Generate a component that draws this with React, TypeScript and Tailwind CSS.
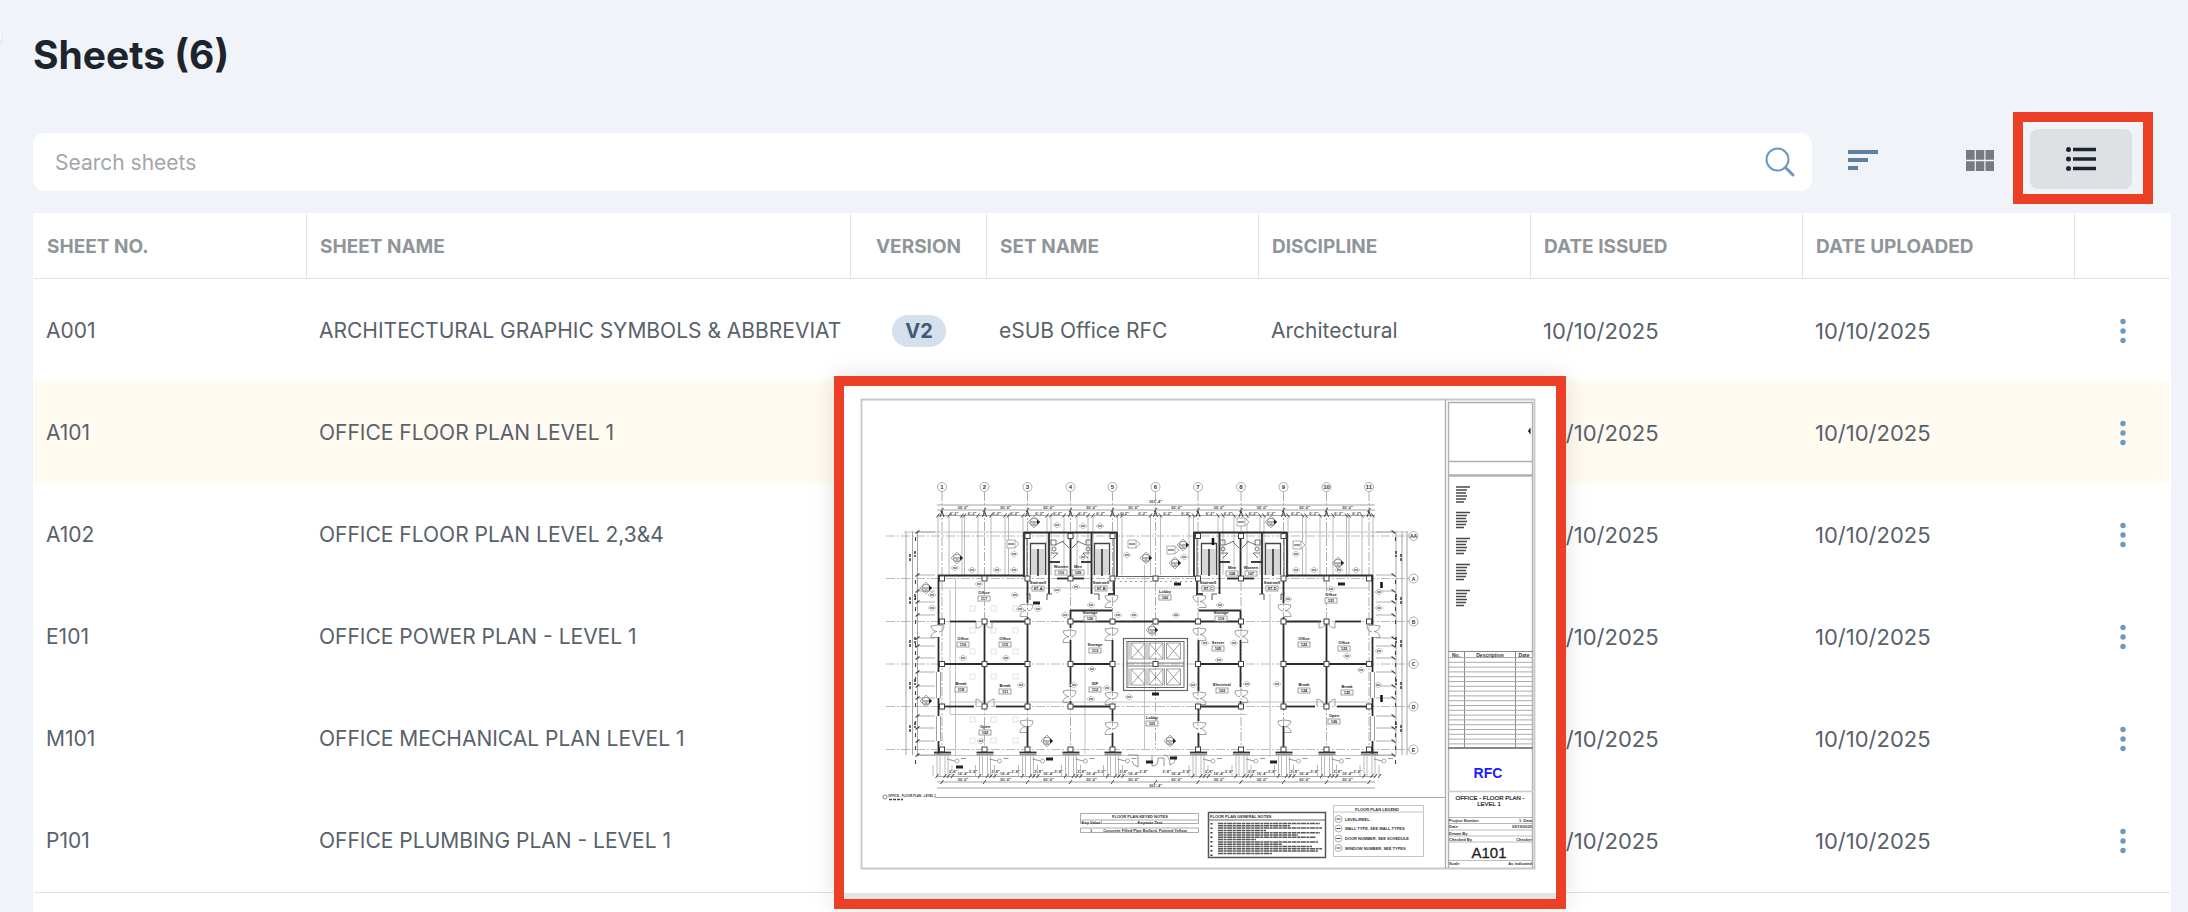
import type { ReactNode } from 'react';

type Sheet = {
  no: string;
  name: string;
  version: string;
  set: string;
  discipline: string;
  issued: string;
  uploaded: string;
  active?: boolean;
};

const sheets: Sheet[] = [
  { no: 'A001', name: 'ARCHITECTURAL GRAPHIC SYMBOLS & ABBREVIAT', version: 'V2', set: 'eSUB Office RFC', discipline: 'Architectural', issued: '10/10/2025', uploaded: '10/10/2025' },
  { no: 'A101', name: 'OFFICE FLOOR PLAN LEVEL 1', version: '', set: '', discipline: '', issued: '10/10/2025', uploaded: '10/10/2025', active: true },
  { no: 'A102', name: 'OFFICE FLOOR PLAN LEVEL 2,3&4', version: '', set: '', discipline: '', issued: '10/10/2025', uploaded: '10/10/2025' },
  { no: 'E101', name: 'OFFICE POWER PLAN - LEVEL 1', version: '', set: '', discipline: '', issued: '10/10/2025', uploaded: '10/10/2025' },
  { no: 'M101', name: 'OFFICE MECHANICAL PLAN LEVEL 1', version: '', set: '', discipline: '', issued: '10/10/2025', uploaded: '10/10/2025' },
  { no: 'P101', name: 'OFFICE PLUMBING PLAN - LEVEL 1', version: '', set: '', discipline: '', issued: '10/10/2025', uploaded: '10/10/2025' },
];

/* ---------- icons ---------- */

function SearchIcon() {
  return (
    <svg width="30" height="30" viewBox="0 0 30 30" fill="none" stroke="#6f98c0">
      <circle cx="12.5" cy="12.5" r="11" strokeWidth="2" />
      <path d="M20.5 20.5 28 28" strokeWidth="3" strokeLinecap="round" />
    </svg>
  );
}

function SortIcon() {
  return (
    <svg width="30" height="20" viewBox="0 0 30 20" fill="#5f7f9f">
      <path d="M0 0h30v4H0zM0 8h20v4H0zM0 16h10v4H0z" />
    </svg>
  );
}

function GridIcon() {
  return (
    <svg width="28" height="21" viewBox="0 0 28 21" fill="#757b80">
      <path d="M0 0h8.7v9.8H0zM9.9 0h8.4v9.8H9.9zM19.5 0H28v9.8h-8.5zM0 11.2h8.7V21H0zM9.9 11.2h8.4V21H9.9zM19.5 11.2H28V21h-8.5z" />
    </svg>
  );
}

function ListIcon() {
  return (
    <svg width="30" height="24" viewBox="0 0 30 24" fill="#1d242d">
      <circle cx="2.5" cy="2.5" r="2.5" />
      <circle cx="2.5" cy="12" r="2.5" />
      <circle cx="2.5" cy="21.5" r="2.5" />
      <path d="M7 .8h23v3.4H7zM7 10.3h23v3.4H7zM7 19.8h23v3.4H7z" />
    </svg>
  );
}

function DotsIcon() {
  return (
    <svg width="6" height="26" viewBox="0 0 6 26" fill="#6f98c0">
      <circle cx="3" cy="3.5" r="2.7" />
      <circle cx="3" cy="13" r="2.7" />
      <circle cx="3" cy="22.5" r="2.7" />
    </svg>
  );
}

/* ---------- floor plan drawing ---------- */

const gridX = [942, 984.5, 1027.5, 1070.5, 1112.5, 1155.5, 1198, 1241, 1283.5, 1326.5, 1369];
const gridY = [536, 578.5, 621.5, 664, 706.5, 749.5];
const gridNames = ['AA', 'A', 'B', 'C', 'D', 'E'];
const CENTER = 1155.5;

// x1, y1, x2, y2 of the left half, repeated on the right
const walls: number[][] = [
  [938.5, 575, 938.5, 625],
  [938.5, 637, 938.5, 672],
  [938.5, 698, 938.5, 716],
  [938.5, 741, 938.5, 754],
  [938, 575.5, 1024, 575.5],
  [1024, 532.5, 1117, 532.5],
  [1024, 532, 1024, 577],
  [1117, 532, 1117, 577],
  [1049, 532, 1049, 594],
  [1070.5, 532, 1070.5, 579],
  [1091.5, 532, 1091.5, 594],
  [1114, 577, 1114, 594],
  [1057, 578.5, 1084, 578.5],
  [1049, 562, 1060, 562],
  [1081, 562, 1091, 562],
  [1108, 594, 1115, 594],
  [1027.5, 580, 1027.5, 603],
  [1027.5, 617, 1027.5, 710],
  [1027.5, 726, 1027.5, 749],
  [950, 621.5, 976, 621.5],
  [990, 621.5, 1027.5, 621.5],
  [942, 664, 1027.5, 664],
  [942, 706.5, 974, 706.5],
  [996, 706.5, 1027.5, 706.5],
  [984.5, 621, 984.5, 706],
  [1070.5, 610.5, 1112.5, 610.5],
  [1070.5, 610, 1070.5, 628],
  [1070.5, 640, 1070.5, 687],
  [1070.5, 701, 1070.5, 707],
  [1070.5, 621.5, 1155, 621.5],
  [1070.5, 664, 1112.5, 664],
  [1070.5, 706.5, 1112.5, 706.5],
  [1112.5, 640, 1112.5, 691],
  [1112.5, 706, 1112.5, 721],
  [1112.5, 733, 1112.5, 749],
];

const ticksX = [938, 949, 962, 964.5, 978, 991, 1005, 1008.5, 1023, 1047, 1051, 1064, 1077, 1088, 1093, 1117.5, 1122, 1150.5];

const rooms: [number, number, string, string][] = [
  [984, 595, 'Office', '117'],
  [963, 641, 'Office', '116'],
  [1005, 641, 'Office', '115'],
  [961, 686, 'Break', '118'],
  [1005, 688, 'Break', '111'],
  [985, 729, 'Open', '102'],
  [1095, 647, 'Storage', '113'],
  [1095, 686, 'IDF', '112'],
  [1038, 585, 'Stairwell', 'ST-A'],
  [1101, 585, 'Stairwell', 'ST-B'],
  [1061, 569, 'Women', '110'],
  [1078, 569, 'Men', '109'],
  [1090, 615, 'Storage', '120'],
  [1165, 594, 'Lobby', '100'],
  [1152, 720, 'Lobby', '101'],
  [1208, 585, 'Stairwell', 'ST-C'],
  [1272, 585, 'Stairwell', 'ST-D'],
  [1232, 570, 'Men', '108'],
  [1251, 570, 'Women', '107'],
  [1221, 615, 'Storage', '119'],
  [1218, 645, 'Server', '105'],
  [1222, 687, 'Electrical', '103'],
  [1331, 597, 'Office', '121'],
  [1304, 641, 'Office', '122'],
  [1344, 645, 'Office', '123'],
  [1304, 687, 'Break', '124'],
  [1347, 689, 'Break', '125'],
  [1334, 718, 'Open', '126'],
];

const doors: number[][] = [
  [938, 625], [1027, 604], [1027, 720], [1070, 630], [1070, 690], [1112, 595], [1112, 628],
  [1112, 692], [1112, 722],
];

const tags: number[][] = [
  [979, 584], [1020, 609], [1038, 609], [1015, 595], [1065, 615], [1083, 557], [1057, 590], [1076, 587],
  [1091, 605], [1118, 615], [1134, 615], [1176, 615], [1014, 554], [955, 568], [972, 570], [997, 570],
  [1014, 570], [1057, 525], [1083, 526], [1100, 526], [1127, 555], [1184, 557], [932, 595], [932, 608],
  [963, 658], [1006, 658], [1021, 685], [1092, 669], [1091, 699], [1074, 685], [1129, 697], [981, 741],
  [1107, 688], [1220, 605], [1288, 599], [1277, 684], [1247, 684], [1205, 643], [1234, 643], [1219, 660],
  [1296, 554], [1296, 570], [1314, 570], [1339, 570], [1356, 570], [1379, 592], [1379, 608], [1379, 651],
  [1378, 685], [1347, 656], [1361, 670], [1331, 589], [1193, 685],
];

const compass: number[][] = [
  [957, 558], [1034, 522], [1146, 558], [926, 588], [926, 701], [1152, 630], [1271, 522], [1047, 741],
  [1170, 741], [1175, 563], [1183, 545], [1338, 563],
];

const blackMarks: number[][] = [
  [1177, 584], [959, 767], [1049, 759], [1155, 694], [1149, 762], [1173, 758], [1341, 584], [1273, 762], [1036, 603],
];

const notes = [114, 84, 116, 60, 114, 92, 110, 50, 112, 76, 106, 116, 112, 66];

function Both({ children }: { children: ReactNode }) {
  return (
    <>
      {children}
      <g transform={`matrix(-1 0 0 1 ${CENTER * 2} 0)`}>{children}</g>
    </>
  );
}

function Stair({ x }: { x: number }) {
  return (
    <g stroke="#444" fill="none">
      <path d={`M${x} 575V543.5h15V575`} strokeWidth="1.3" />
      {Array.from({ length: 13 }, (_, i) => (
        <path key={i} d={`M${x + 1} ${550 + i * 2}h13`} stroke="#999" strokeWidth=".8" />
      ))}
      <path d={`M${x + 7.5} 549v27`} strokeWidth="1.8" />
    </g>
  );
}

function Plan() {
  return (
    <g>
      {/* grid lines and bubbles */}
      {gridX.map((x, i) => (
        <g key={x}>
          <path d={`M${x} 492V749`} stroke="#999" strokeWidth=".8" strokeDasharray="9 2 2 2" />
          <circle cx={x} cy="487" r="4.5" fill="#fff" stroke="#999" strokeWidth=".8" />
          <text x={x} y="489" fontSize="6" fontWeight="700" textAnchor="middle" fill="#333">{i + 1}</text>
        </g>
      ))}
      {gridY.map((y, i) => (
        <g key={y}>
          <path d={`M886 ${y}H1409`} stroke="#aaa" strokeWidth=".8" strokeDasharray="9 2 2 2" />
          <circle cx="1413.5" cy={y} r="4.5" fill="#fff" stroke="#999" strokeWidth=".8" />
          <text x="1413.5" y={y + 2} fontSize="5" fontWeight="700" textAnchor="middle" fill="#333">{gridNames[i]}</text>
        </g>
      ))}

      {/* dimension strings */}
      <g stroke="#999" strokeWidth=".9" fill="none">
        <path d="M937 505H1375M937 510H1375M937 515.5H1375M937 776.5H1375M937 782H1375M937 788H1375" />
        <path d="M906 531V755M912.5 531V755M917.5 531V755M1396 531V755M1402 531V755M1407 531V755" />
        <path d="M904 532H1024M1287 532H1408M917 588H1370M917 755.5H1396M950 702H1370M950 714.5H1247" stroke="#bbb" />
        <path d="M955.5 578V756M1085 621V754M1144.5 565V749M1270 594V757M950 590V714" stroke="#bbb" />
      </g>
      {ticksX.map((x) => (
        <Both key={x}>
          <path d={`M${x} 515V575`} stroke="#aaa" strokeWidth=".8" />
          <path d={`M${x - 1.5} 517.5l3-4`} stroke="#444" strokeWidth="1" />
        </Both>
      ))}
      {gridX.map((x) => (
        <path key={x} d={`M${x - 1.5} 512l3-4M${x - 1.5} 784l3-4M${x - 2} 517l2-6 2 6`} fill="none" stroke="#444" strokeWidth="1" />
      ))}
      {gridX.slice(0, 10).map((x) => (
        <g key={x} fontSize="4" fontWeight="700" textAnchor="middle" fill="#444">
          <text x={x + 21} y="509">30'-0"</text>
          <text x={x + 12} y="515">6'-2"</text>
          <text x={x + 30} y="515">6'-2"</text>
          <text x={x + 21} y="781">30'-0"</text>
          <text x={x + 21} y="775">16'-4"</text>
          <text x={x + 11} y="773">3'-8"</text>
          <text x={x + 31} y="773">3'-8"</text>
        </g>
      ))}
      <g fontSize="4" fontWeight="700" textAnchor="middle" fill="#444">
        <text x="1155.5" y="503">301'-4"</text>
        <text x="1155.5" y="787">301'-4"</text>
      </g>
      {[532, 575, 591, 602, 615, 638, 646, 658, 672, 686, 698, 716, 728, 741, 755].map((y) => (
        <Both key={y}>
          <path d={`M917 ${y}h18`} stroke="#999" strokeWidth=".8" />
          <path d={`M915.5 ${y + 1.5}l4-3M915.5 ${y + 5}v4`} stroke="#444" strokeWidth="1.1" />
        </Both>
      ))}
      {[557, 600, 643, 685, 728].map((y) => (
        <Both key={y}>
          <path d={`M910 ${y - 3}v3m0 1v3M915 ${y - 6}v3m0 1v2`} stroke="#444" strokeWidth="1.6" />
        </Both>
      ))}

      {/* walls */}
      <Both>
        {walls.map((w, i) => (
          <path key={i} d={`M${w[0]} ${w[1]}L${w[2]} ${w[3]}`} stroke="#2c2c2c" strokeWidth="1.8" />
        ))}
        <path d="M1027 536V577M1114 536V577M1026 594h4v6M1052 594h-5v6M1094 594h5v6" fill="none" stroke="#555" strokeWidth="1" />
        <path d="M936.5 672V698M940.5 672V698M936.5 716V741M940.5 716V741" stroke="#888" strokeWidth=".8" />
        <Stair x={1030.5} />
        <Stair x={1094.5} />
        {/* restroom fixtures */}
        <g fill="none" stroke="#666" strokeWidth=".9">
          <path d="M1051 540h5v5h-5zM1086 540h5v5h-5zM1051 553h7l-5 5M1090 553h-7l5 5M1062 541l7 7M1079 541l-7 7M1055 545l9-4M1086 545l-9-4" />
          <circle cx="1054" cy="549" r="2" />
          <circle cx="1088" cy="549" r="2" />
        </g>
        {doors.map(([x, y]) => (
          <path
            key={`${x}-${y}`}
            d={`M${x} ${y}l-7 1q1 5 6 5.5q-6 1 -6 6l7 0M${x} ${y}l6 1q0 5 -5 6`}
            fill="none"
            stroke="#888"
            strokeWidth=".8"
          />
        ))}
        <path d="M976 621.5v6.5q6 0 7-6M992 621.5v6.5q-6 0-7-6M976 706v-7q6 1 7 7M994 706v-7q-6 1-7 7" fill="none" stroke="#888" strokeWidth=".8" />
      </Both>
      <path d="M1117 576.5H1194" stroke="#666" strokeWidth="1.2" />
      <path d="M1120 581.5H1192" stroke="#888" strokeWidth=".8" strokeDasharray="2 3" />

      {/* ceiling marks in the open offices */}
      {[970, 991, 1013].map((x) =>
        [606, 628, 649, 674, 717, 738].map((y) => (
          <rect key={`${x}-${y}`} x={x} y={y} width="5" height="5" fill="none" stroke="#ddd" strokeWidth=".8" />
        )),
      )}

      {/* elevator core */}
      <g fill="none" stroke="#666">
        <rect x="1123.5" y="638.5" width="64" height="52" strokeWidth="1.2" />
        <rect x="1127" y="641.5" width="57" height="46" />
        <path d="M1127 663H1184M1127 666H1184" strokeWidth=".9" />
        {[1131, 1149, 1166.5].map((x) =>
          [643, 669].map((y) => (
            <path
              key={`${x}-${y}`}
              d={`M${x} ${y}h14v16h-14zl14 16m0-16l-14 16M${x - 2} ${y - 1}v18`}
              strokeWidth=".8"
              stroke="#888"
            />
          )),
        )}
      </g>

      {/* columns */}
      {gridX.map((x, i) =>
        gridY.map((y, j) => {
          if (j === 0 && (i < 2 || i > 8 || i === 5)) return null;
          if (i === 5 && j > 3) return null;
          return <rect key={`${x}-${y}`} x={x - 2.5} y={y - 2.5} width="5" height="5" fill="#fff" stroke="#444" />;
        }),
      )}

      {/* footings along the south side */}
      {gridX.map((x, i) =>
        i === 5 ? null : (
          <g key={x} fill="none">
            <path d={`M${x - 8} 752.5h17`} stroke="#333" strokeWidth="1.8" />
            <path d={`M${x - 8} 754.5h17`} stroke="#999" strokeWidth="1.5" />
            <path
              d={`M${x - 5} 755v22M${x - 2} 755v22M${x + 3} 755v22M${x + 6} 755v22M${x - 9} 765v11M${x + 10} 765v11`}
              stroke="#aaa"
              strokeWidth=".8"
            />
            <path d={`M${x - 6.5} 778l3-4M${x + 1.5} 778l3-4M${x + 5} 778l3-4M${x + 9} 778l3-4`} stroke="#444" />
            <circle cx={x + 15} cy="761" r="2" stroke="#999" strokeWidth=".8" />
            <path d={`M${x + 5} 759l8 2M${x + 19} 758.5h5`} stroke="#888" strokeWidth=".9" />
          </g>
        ),
      )}
      <path d="M1128 755h10v12q-5-1-6-6M1152 755v11q7 0 6-8h6v8M1164 755q6 0 6 10 6-2 6-10" fill="none" stroke="#888" strokeWidth=".9" />

      {/* markers */}
      {tags.map(([x, y]) => (
        <g key={`${x}-${y}`}>
          <path d={`M${x - 4} ${y}l4-3 4 3-4 3z`} fill="#fff" stroke="#aaa" strokeWidth=".7" />
          <path d={`M${x - 2} ${y}h4`} stroke="#555" strokeWidth="1.2" />
        </g>
      ))}
      {compass.map(([x, y]) => (
        <g key={`${x}-${y}`}>
          <path d={`M${x - 6} ${y}l6-6 6 6-6 6z`} fill="none" stroke="#999" strokeWidth=".8" />
          <circle cx={x} cy={y} r="3.8" fill="#fff" stroke="#777" strokeWidth=".8" />
          <path d={`M${x - 3} ${y}h6M${x - 1.5} ${y + 2}h3`} stroke="#555" strokeWidth=".9" />
          <path d={`M${x + 3} ${y - 2.5}l3 2.5-3 2.5z`} fill="#222" />
        </g>
      ))}
      {[[1011, 544], [1132, 544], [1171, 550], [1297, 545], [1241, 522]].map(([x, y]) => (
        <g key={`${x}-${y}`}>
          <path d={`M${x - 4} ${y - 4}h8v8h-8zM${x + 4} ${y - 4}l4 4-4 4`} fill="#fff" stroke="#999" strokeWidth=".8" />
          <path d={`M${x - 3} ${y}h6`} stroke="#555" strokeWidth="1.2" />
        </g>
      ))}
      {blackMarks.map(([x, y]) => (
        <rect key={`${x}-${y}`} x={x - 3} y={y - 1.5} width="7" height="3" fill="#222" />
      ))}
      <path d="M1381.5 582v6M1381.5 695v7M1213 538v7" stroke="#111" strokeWidth="2.5" />

      {/* room names */}
      {rooms.map(([x, y, name, no]) => (
        <g key={`${x}-${y}`} textAnchor="middle" fill="#222" fontWeight="700" fontSize="4">
          <rect x={x - 6} y={y + 1} width="12" height="5" fill="#fff" stroke="#888" strokeWidth=".8" />
          <text x={x} y={y - 1}>{name}</text>
          <text x={x} y={y + 5}>{no}</text>
        </g>
      ))}
    </g>
  );
}

function TitleBlock() {
  return (
    <g>
      <g stroke="#b0b0b0" fill="none" strokeWidth="1.4">
        <path d="M1445.5 399V868M1448.5 402V868M1532.5 402V868M1448 402.5H1533M1448 461.5H1533" />
        <path d="M1448 475.5H1533" strokeWidth="2.5" />
        <path d="M1448 791.5H1533" stroke="#ccc" />
      </g>
      <path d="M1528 431l2.5-3.5v7z" fill="#111" />
      {[487, 512.5, 538.5, 564.5, 590.5].map((y) => (
        <path
          key={y}
          d={`M1456 ${y}h14M1456 ${y + 3}h11M1456 ${y + 6}h10M1456 ${y + 9}h11M1456 ${y + 12}h10M1456 ${y + 15}h8`}
          stroke="#4a4a4a"
          strokeWidth="1.7"
        />
      ))}

      {/* revisions */}
      <g stroke="#888" strokeWidth="1">
        <path d="M1448 651.5H1533M1464.5 651V748M1515.5 651V748" />
        {Array.from({ length: 19 }, (_, i) => (
          <path key={i} d={`M1448 ${657.5 + i * 4.8}H1533`} stroke="#aaa" />
        ))}
        <path d="M1448 748H1533" strokeWidth="1.8" />
      </g>
      <g fontSize="5" fontWeight="700" textAnchor="middle" fill="#333">
        <text x="1456" y="656.5">No.</text>
        <text x="1490" y="656.5">Description</text>
        <text x="1524" y="656.5">Date</text>
      </g>

      <text x="1488" y="778" fontSize="14" fontWeight="700" textAnchor="middle" fill="#1c1cff">RFC</text>
      <g fontSize="6" fontWeight="400" textAnchor="middle" fill="#222" stroke="#222" strokeWidth=".2">
        <text x="1490" y="799.5">OFFICE - FLOOR PLAN -</text>
        <text x="1489" y="806">LEVEL 1</text>
      </g>
      <path d="M1448 817.5H1533M1448 823.5H1533M1448 830H1533M1448 836H1533M1448 842H1533M1448 860.5H1533" stroke="#aaa" strokeWidth=".8" />
      <g fontSize="4" fontWeight="700" fill="#333">
        <text x="1449" y="821.5">Project Number</text>
        <text x="1449" y="828">Date</text>
        <text x="1449" y="834.5">Drawn By</text>
        <text x="1449" y="841">Checked By</text>
        <text x="1449" y="865">Scale</text>
        <g textAnchor="end">
          <text x="1532" y="821.5">1. Data</text>
          <text x="1532" y="828">09/19/2025</text>
          <text x="1532" y="841">Checker</text>
          <text x="1532" y="865">As indicated</text>
        </g>
      </g>
      <text x="1489" y="858" fontSize="15" textAnchor="middle" fill="#222" stroke="#222" strokeWidth=".3">A101</text>
    </g>
  );
}

function Legends() {
  return (
    <g fontWeight="700" fill="#333">
      <path d="M935 797.5H1446" stroke="#aaa" strokeWidth="1.2" />
      <circle cx="885" cy="797" r="2" fill="none" stroke="#666" strokeWidth=".8" />
      <text x="888" y="797" fontSize="3">OFFICE - FLOOR PLAN - LEVEL 1</text>
      <path d="M889 799.5h14" stroke="#444" strokeWidth="1.5" strokeDasharray="3 1" />

      {/* keynotes */}
      <path d="M1080.5 813.5h118v10h-118zM1080.5 820h118M1101.5 820v3.5M1080.5 828h118v4.5h-118z" fill="none" stroke="#aaa" />
      <g fontSize="4" textAnchor="middle">
        <text x="1140" y="818">FLOOR PLAN KEYED NOTES</text>
        <text x="1091" y="823.5">Key Value</text>
        <text x="1150" y="823.5">Keynote Text</text>
        <text x="1091" y="832">1</text>
        <text x="1145" y="832">Concrete Filled Pipe Bollard, Painted Yellow</text>
      </g>

      {/* general notes */}
      <path d="M1208.5 812.5h117v45h-117z" fill="none" stroke="#555" strokeWidth="1.5" />
      <path d="M1208 820h118" stroke="#666" />
      <text x="1210" y="818" fontSize="4">FLOOR PLAN GENERAL NOTES</text>
      {notes.map((w, i) => (
        <path key={i} d={`M1218 ${823.5 + i * 2.3}h${w - 12}`} stroke="#555" strokeWidth="1.5" strokeDasharray="5 .6 3 .6" />
      ))}
      <path d="M1211.5 823V856" stroke="#333" strokeWidth="2" strokeDasharray="1.5 3" />

      {/* symbols legend */}
      <path d="M1333.5 805.5h90v51h-90zM1333.5 812h90" fill="none" stroke="#c4c4c4" />
      <g fontSize="4">
        <text x="1377" y="810.5" textAnchor="middle">FLOOR PLAN LEGEND</text>
        {(
          [
            ['LEVEL/REEL', 819],
            ['WALL TYPE, SEE WALL TYPES', 828.5],
            ['DOOR NUMBER, SEE SCHEDULE', 838.5],
            ['WINDOW NUMBER, SEE TYPES', 848],
          ] as [string, number][]
        ).map(([label, y]) => (
          <g key={label}>
            <circle cx="1338.5" cy={y} r="3.5" fill="none" stroke="#999" strokeWidth=".8" />
            <path d={`M1336.5 ${y}h4`} stroke="#444" />
            <text x="1345" y={y + 1.5}>{label}</text>
          </g>
        ))}
      </g>
    </g>
  );
}

function SheetPreview() {
  return (
    <svg
      viewBox="844 386 712 507"
      className="block w-full"
      fontFamily="'Liberation Sans', Arial, sans-serif"
      role="img"
      aria-label="A101 office floor plan"
    >
      <path d="M861.5 399.5H1534.5V868.5H861.5Z" fill="none" stroke="#c8c8c8" strokeWidth="1.8" />
      <Plan />
      <TitleBlock />
      <Legends />
    </svg>
  );
}

/* ---------- page ---------- */

const head = 'border-r border-b border-[#e0e2e3] px-[13px] pt-0.5 text-left text-[19px] font-bold';

function SheetsTable() {
  return (
    <table className="w-full table-fixed border-separate border-spacing-0 text-[#59616b]">
      <colgroup>
        <col className="w-[273px]" />
        <col />
        <col className="w-[136px]" />
        <col className="w-[272px]" />
        <col className="w-[272px]" />
        <col className="w-[272px]" />
        <col className="w-[272px]" />
        <col className="w-[95px]" />
      </colgroup>
      <thead>
        <tr className="h-[65px] text-[#8f9599]">
          <th className={head}>SHEET NO.</th>
          <th className={head}>SHEET NAME</th>
          <th className="border-r border-b border-[#e0e2e3] pt-0.5 text-center text-[19px] font-bold">VERSION</th>
          <th className={head}>SET NAME</th>
          <th className={head}>DISCIPLINE</th>
          <th className={head}>DATE ISSUED</th>
          <th className={head}>DATE UPLOADED</th>
          <th className="border-b border-[#e0e2e3]" aria-label="Actions" />
        </tr>
      </thead>
      <tbody>
        {sheets.map((s) => (
          <tr key={s.no} className={s.active ? 'h-[102px] bg-[#fffbf0]' : 'h-[102px]'}>
            <td className="px-3 pt-0.5 text-[21px]">{s.no}</td>
            <td className="overflow-hidden pt-0.5 pl-3 text-[21px] whitespace-nowrap">{s.name}</td>
            <td className="pt-0.5 text-center">
              {s.version && (
                <span className="inline-flex h-8 items-center rounded-full bg-[#d4e0ec] px-[13px] text-xl font-bold text-[#435a75]">
                  {s.version}
                </span>
              )}
            </td>
            <td className="px-3 pt-0.5 text-[21px]">{s.set}</td>
            <td className="px-3 pt-0.5 text-[21px]">{s.discipline}</td>
            <td className="px-3 pt-0.5 text-[22px]">{s.issued}</td>
            <td className="px-3 pt-0.5 text-[22px]">{s.uploaded}</td>
            <td className="pt-0.5 text-center">
              <button type="button" aria-label={`Actions for ${s.no}`} className="inline-flex h-10 w-10 items-center justify-center align-middle">
                <DotsIcon />
              </button>
            </td>
          </tr>
        ))}
      </tbody>
    </table>
  );
}

export default function App() {
  return (
    <div className="relative flex min-h-screen flex-col overflow-hidden bg-[#f0f4f9] pr-[17px] pl-[33px] font-[Inter,sans-serif]">
      <button type="button" aria-label="Expand menu" className="absolute top-5 -left-[31px] h-8 w-8 rounded-full bg-white shadow" />

      <h1 className="pt-[31px] text-[39px] leading-[48px] font-bold text-[#1d242d]">Sheets (6)</h1>

      <div className="mt-[33px] mb-px flex items-center">
        <div className="flex h-[58px] flex-1 items-center rounded-xl bg-white pr-[17px] pl-[22px]">
          <input
            type="search"
            aria-label="Search sheets"
            placeholder="Search sheets"
            className="h-full flex-1 bg-transparent text-[21px] text-[#59616b] outline-none placeholder:text-[#a3a6aa]"
          />
          <button type="button" aria-label="Search">
            <SearchIcon />
          </button>
        </div>
        <button type="button" aria-label="Sort" className="mb-1 ml-9">
          <SortIcon />
        </button>
        <button type="button" aria-label="Grid view" className="mb-1 ml-[88px]">
          <GridIcon />
        </button>
        <div className="mr-[18px] mb-2 ml-[19px] border-10 border-[#eb4026] pt-[7px] pr-[11px] pb-[5px] pl-[7px]">
          <button type="button" aria-label="List view" aria-pressed="true" className="flex h-[60px] w-[102px] items-center justify-center rounded-lg bg-[#dde1e4]">
            <ListIcon />
          </button>
        </div>
      </div>

      <div className="relative flex-1 bg-white p-px">
        <SheetsTable />
        <div className="mt-px border-t border-[#dfe1e3]" />

        {/* Hover preview of the active row */}
        <div className="absolute top-[163px] left-[801px] w-[732px] border-10 border-[#eb4026] bg-[#e2e3e5] pb-1.5 shadow-[0_0_24px_rgba(0,0,0,0.12)]">
          <div className="bg-white">
            <SheetPreview />
          </div>
        </div>
      </div>
    </div>
  );
}
